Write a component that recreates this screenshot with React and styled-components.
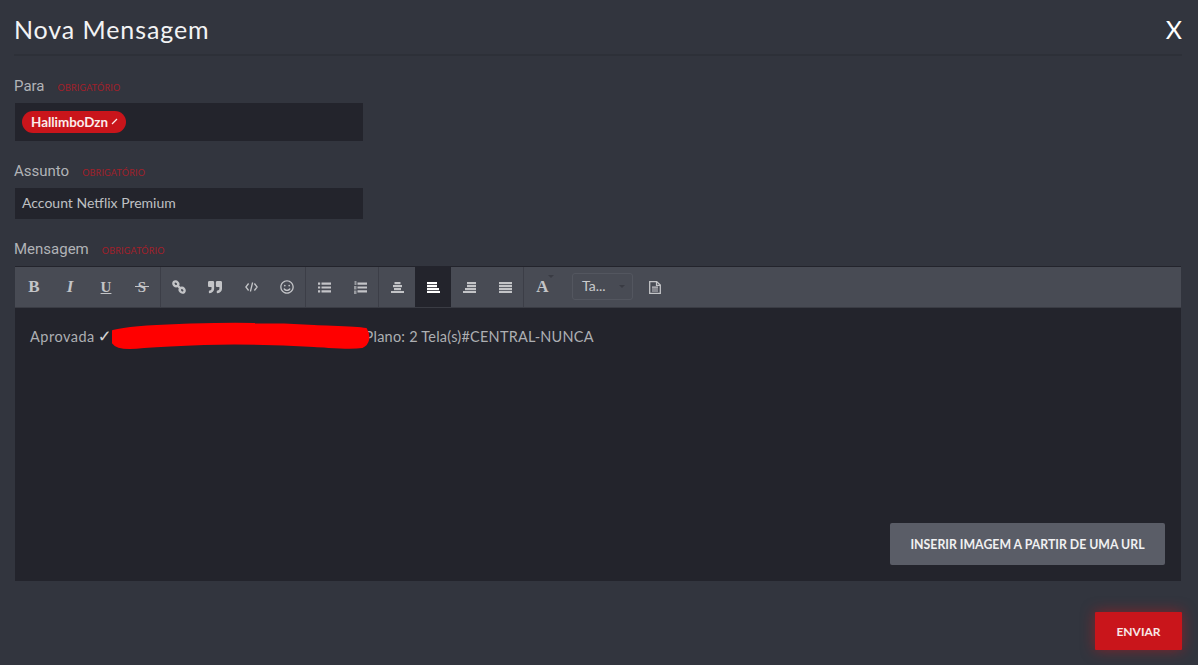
import React from 'react';
import styled, { createGlobalStyle } from 'styled-components';
import { FaQuoteRight, FaRegSmile } from 'react-icons/fa';

const GlobalStyle = createGlobalStyle`
  html, body {
    margin: 0;
    padding: 0;
    background: #32353e;
    font-family: 'Roboto', sans-serif;
  }
  * { box-sizing: border-box; }
`;

const Modal = styled.div`
  width: 1198px;
  height: 665px;
  overflow: hidden;
  padding: 0 16px 0 14px;
  display: flex;
  flex-direction: column;
  background: #32353e;
`;

const Header = styled.header`
  height: 56px;
  flex: none;
  display: flex;
  align-items: center;
  justify-content: space-between;
  padding-top: 3px;
  border-bottom: 2px solid #2d3038;
`;

const Title = styled.h1`
  margin: 0;
  font: 400 25px 'Lato', sans-serif;
  letter-spacing: 0.9px;
  color: #f2f3f4;
`;

const Close = styled.span`
  font: 400 25px 'Lato', sans-serif;
  color: #fff;
`;

const Field = styled.div`
  margin-top: 20px;
`;

const LabelRow = styled.div`
  display: flex;
  align-items: baseline;
  gap: 13px;
  height: 20px;
  line-height: 20px;
`;

const Label = styled.label`
  font-size: 15px;
  color: #b1b3b7;
`;

const Required = styled.span`
  font: 400 9px 'Lato', sans-serif;
  letter-spacing: 0.2px;
  color: #a3202a;
`;

const InputBox = styled.div`
  margin: 7px 0 0 1px;
  width: 348px;
  height: ${props => props.$height}px;
  padding: 0 0 ${props => props.$lift}px 7px;
  display: flex;
  align-items: center;
  background: #23242c;
  font: 400 14px 'Lato', sans-serif;
  color: #bfc0c3;
`;

const Chip = styled.span`
  height: 22px;
  padding: 0 8px 0 9px;
  display: inline-flex;
  align-items: center;
  gap: 3px;
  border-radius: 11px;
  background: #c9151b;
  color: #fbecec;
  font: 700 13.4px 'Lato', sans-serif;
`;

const Editor = styled.div`
  margin: 7px 0 0 1px;
  width: 1166px;
  height: 315px;
  display: flex;
  flex-direction: column;
  background: #23242c;
`;

const Toolbar = styled.div`
  height: 42px;
  flex: none;
  padding-left: 1px;
  display: flex;
  align-items: stretch;
  border-top: 1px solid #23242c;
  border-bottom: 1px solid #3a3c44;
  background: #484b54;
`;

const ToolGroup = styled.div`
  display: flex;
  align-items: stretch;
  border-right: 1px solid #3c3e47;
`;

const ToolButton = styled.span`
  position: relative;
  width: ${props => props.$wide ? 37 : 36}px;
  display: flex;
  align-items: center;
  justify-content: center;
  color: ${props => props.$active ? '#fff' : '#c3c4c7'};
  background: ${props => props.$active ? '#23242c' : 'transparent'};
  font-size: 14px;
`;

const Glyph = styled.span`
  font: ${props => props.$italic ? 'italic 700' : '700'} ${props => props.$size || 17}px 'Liberation Serif', serif;
  text-decoration: ${props => props.$line || 'none'};
`;

const Strike = styled.span`
  position: absolute;
  left: 11px;
  width: 14px;
  height: 1px;
  top: 19px;
  background: #c3c4c7;
`;

const Caret = styled.span`
  position: absolute;
  top: ${props => props.$top}px;
  right: ${props => props.$right}px;
  border: 3px solid transparent;
  border-top-color: #393b43;
`;

const SizeSelect = styled.span`
  position: relative;
  width: 61px;
  height: 27px;
  margin: 6px 4px 0 11px;
  padding-left: 9px;
  border: 1px solid #53565f;
  border-radius: 3px;
  font: 400 14px/24px 'Lato', sans-serif;
  color: #c9cacc;
`;

const Body = styled.div`
  flex: 1;
  padding: 18px 16px 16px 15px;
  display: flex;
  flex-direction: column;
  justify-content: space-between;
`;

const Line = styled.div`
  display: flex;
  align-items: center;
  height: 20px;
  font: 400 14.5px 'Lato', sans-serif;
  letter-spacing: 0.5px;
  color: #adafb3;
`;

const Check = styled.span`
  margin-left: 3px;
  font: 700 16.5px 'DejaVu Sans', sans-serif;
  letter-spacing: 0;
  color: #d2d3d5;
`;

const Tail = styled.span`
  letter-spacing: 0.23px;
`;

const Scribble = styled.svg`
  position: relative;
  z-index: 1;
  width: 262px;
  height: 28px;
  margin: 0 -6px 0 -3px;
  flex: none;
`;

const ImageButton = styled.button`
  align-self: flex-end;
  width: 275px;
  height: 42px;
  border: 0;
  border-radius: 2px;
  background: #5a5d67;
  color: #f0f0f1;
  font: 700 12.3px 'Lato', sans-serif;
`;

const Footer = styled.div`
  margin-top: 31px;
  display: flex;
  justify-content: flex-end;
`;

const SendButton = styled.button`
  width: 87px;
  height: 38px;
  border: 0;
  border-radius: 1px;
  background: #c9151b;
  box-shadow: 0 0 14px rgba(201, 21, 27, 0.55);
  color: #f7e8e8;
  font: 700 12px 'Lato', sans-serif;
`;

const LinkIcon = () => (
  <svg width="14" height="14" viewBox="0 0 14 14" fill="none" stroke="currentColor" strokeWidth="2.4">
    <ellipse cx="3.8" cy="3.8" rx="2.6" ry="2.2" transform="rotate(45 3.8 3.8)" />
    <ellipse cx="10.2" cy="10.2" rx="2.6" ry="2.2" transform="rotate(45 10.2 10.2)" />
    <path d="M5.5 5.5l3 3" />
  </svg>
);

const CodeIcon = () => (
  <svg width="13" height="10" viewBox="0 0 13 10" fill="none" stroke="currentColor" strokeWidth="1.3">
    <path d="M3.6 1.5L.9 5l2.7 3.5M9.4 1.5L12.1 5 9.4 8.5M7.6.5L5.4 9.5" />
  </svg>
);

// the four align buttons only differ by how long each bar is and where it sits
const BarsIcon = ({ widths, align }) => (
  <svg width="13" height="11" viewBox="0 0 13 11" fill="currentColor">
    {widths.map((w, i) => {
      const x = align === 'left' ? 0 : align === 'right' ? 13 - w : (13 - w) / 2;
      return <rect key={i} x={x} y={i * 3} width={w} height="2.2" />;
    })}
  </svg>
);

const ListIcon = () => (
  <svg width="13" height="11" viewBox="0 0 13 11" fill="currentColor">
    <path d="M3.5 0.5h9.5v2.2H3.5zM3.5 4.4h9.5v2.2H3.5zM3.5 8.3h9.5v2.2H3.5z" />
    <path d="M0 0.5h2.2v2.2H0zM0 4.4h2.2v2.2H0zM0 8.3h2.2v2.2H0z" />
  </svg>
);

const OrderedListIcon = () => (
  <svg width="13" height="13" viewBox="0 0 13 13" fill="currentColor">
    <path d="M3.5 1.5H13v2.2H3.5zM3.5 5.4H13v2.2H3.5zM3.5 9.3H13v2.2H3.5z" />
    <path d="M.5 0h2v4h-2zM0 5h2.5v3.5H0zM0 9.5h2.5V13H0z" opacity="0.65" />
  </svg>
);

const DocIcon = () => (
  <svg width="12" height="13" viewBox="0 0 12 13" fill="none" stroke="currentColor" strokeWidth="1.3">
    <path d="M.7.7h7l3.6 3.4v8.2H.7z" />
    <path d="M7.5.7v3.6h3.8M3 6.2h6M3 8h6M3 10h6" strokeWidth="1.2" />
  </svg>
);

const App = () => {
  return (
    <Modal>
      <GlobalStyle />
      <Header>
        <Title>Nova Mensagem</Title>
        <Close>X</Close>
      </Header>

      <Field>
        <LabelRow>
          <Label>Para</Label>
          <Required>OBRIGATÓRIO</Required>
        </LabelRow>
        <InputBox $height={38} $lift={1}>
          <Chip>
            HallimboDzn
            <svg width="7" height="7" viewBox="0 0 7 7" fill="none" stroke="currentColor" strokeWidth="1.2">
              <path d="M1 6l5-5" />
            </svg>
          </Chip>
        </InputBox>
      </Field>

      <Field>
        <LabelRow>
          <Label>Assunto</Label>
          <Required>OBRIGATÓRIO</Required>
        </LabelRow>
        <InputBox $height={31} $lift={3}>Account Netflix Premium</InputBox>
      </Field>

      <Field>
        <LabelRow>
          <Label>Mensagem</Label>
          <Required>OBRIGATÓRIO</Required>
        </LabelRow>
        <Editor>
          <Toolbar>
            <ToolGroup>
              <ToolButton><Glyph>B</Glyph></ToolButton>
              <ToolButton><Glyph $italic>I</Glyph></ToolButton>
              <ToolButton><Glyph $size={15} $line="underline">U</Glyph></ToolButton>
              <ToolButton><Glyph $size={15}>S</Glyph><Strike /></ToolButton>
            </ToolGroup>
            <ToolGroup>
              <ToolButton><LinkIcon /></ToolButton>
              <ToolButton><FaQuoteRight /></ToolButton>
              <ToolButton><CodeIcon /></ToolButton>
              <ToolButton><FaRegSmile /></ToolButton>
            </ToolGroup>
            <ToolGroup>
              <ToolButton><ListIcon /></ToolButton>
              <ToolButton><OrderedListIcon /></ToolButton>
            </ToolGroup>
            <ToolGroup>
              <ToolButton><BarsIcon align="center" widths={[6, 9, 7, 13]} /></ToolButton>
              <ToolButton $active><BarsIcon align="left" widths={[10, 10, 12, 13]} /></ToolButton>
              <ToolButton><BarsIcon align="right" widths={[9, 9, 11, 13]} /></ToolButton>
              <ToolButton><BarsIcon align="left" widths={[13, 13, 13, 13]} /></ToolButton>
            </ToolGroup>
            <ToolButton $wide><Glyph>A</Glyph><Caret $top={8} $right={7} /></ToolButton>
            <SizeSelect>Ta...<Caret $top={11} $right={7} /></SizeSelect>
            <ToolButton><DocIcon /></ToolButton>
          </Toolbar>
          <Body>
            <Line>
              Aprovada
              <Check>✓</Check>
              <Scribble viewBox="0 0 262 28">
                <path
                  d="M4 9 C20 5 40 4 70 3 C100 2 120 1 145 2 C170 2 190 3 205 4 C225 5 245 5 257 7 C261 14 260 22 253 25 C240 27 225 25 205 24 C170 22 130 21 95 22 C70 23 50 24 35 25 C20 27 8 27 4 21 Z"
                  fill="#ff0000"
                  stroke="#ff0000"
                  strokeWidth="2"
                  strokeLinejoin="round"
                />
              </Scribble>
              <Tail>Plano: 2 Tela(s)#CENTRAL-NUNCA</Tail>
            </Line>
            <ImageButton>INSERIR IMAGEM A PARTIR DE UMA URL</ImageButton>
          </Body>
        </Editor>
      </Field>

      <Footer>
        <SendButton>ENVIAR</SendButton>
      </Footer>
    </Modal>
  );
};

export default App;
